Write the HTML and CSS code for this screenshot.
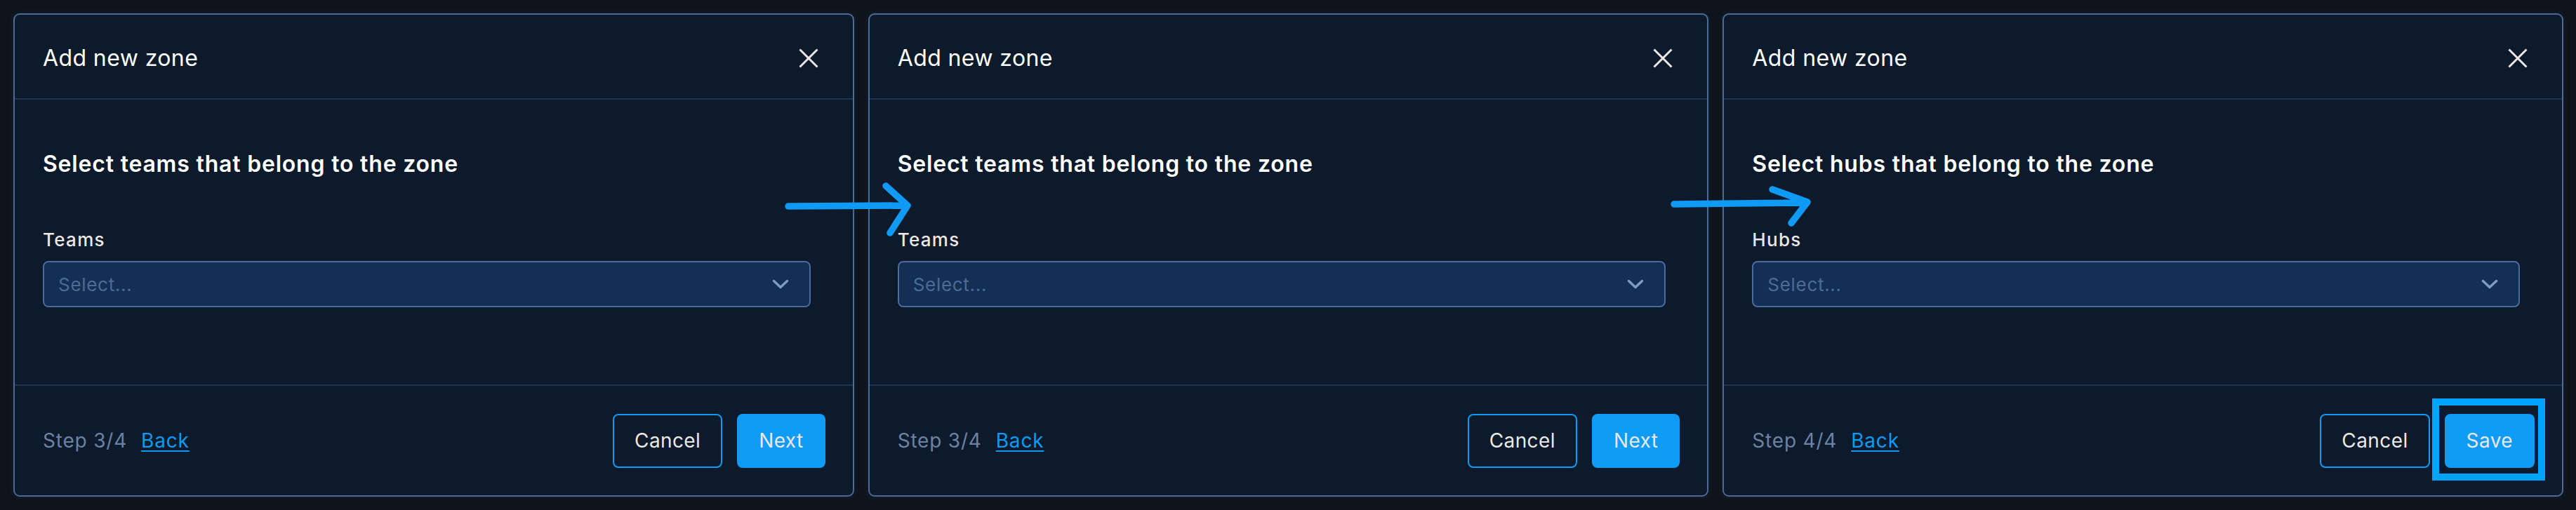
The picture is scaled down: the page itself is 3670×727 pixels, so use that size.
FILE: index.html
```html
<!DOCTYPE html>
<html lang="en">
<head>
<meta charset="utf-8">
<title>Add new zone</title>
<link rel="stylesheet" href="styles.css">
</head>
<body>
<div class="page">
  <section class="modal">
    <header class="modal-header">
      <h2 class="modal-title">Add new zone</h2>
      <button class="close-btn" aria-label="Close"><svg viewBox="0 0 28 28" width="28" height="28"><path d="M1.5 1.5 L26.5 26.5 M26.5 1.5 L1.5 26.5"/></svg></button>
    </header>
    <div class="modal-body">
      <h3 class="step-heading">Select teams that belong to the zone</h3>
      <label class="field-label">Teams</label>
      <div class="select"><span class="placeholder">Select...</span><svg class="chevron" viewBox="0 0 24 14" width="24" height="14"><path d="M2.5 2.5 L12 11.5 L21.5 2.5"/></svg></div>
    </div>
    <footer class="modal-footer">
      <div class="step-info"><span class="step-count">Step 3/4</span><a class="back-link" href="#">Back</a></div>
      <div class="actions"><button class="btn btn-outline">Cancel</button><button class="btn btn-primary">Next</button></div>
    </footer>
  </section>

  <section class="modal">
    <header class="modal-header">
      <h2 class="modal-title">Add new zone</h2>
      <button class="close-btn" aria-label="Close"><svg viewBox="0 0 28 28" width="28" height="28"><path d="M1.5 1.5 L26.5 26.5 M26.5 1.5 L1.5 26.5"/></svg></button>
    </header>
    <div class="modal-body">
      <h3 class="step-heading">Select teams that belong to the zone</h3>
      <label class="field-label">Teams</label>
      <div class="select"><span class="placeholder">Select...</span><svg class="chevron" viewBox="0 0 24 14" width="24" height="14"><path d="M2.5 2.5 L12 11.5 L21.5 2.5"/></svg></div>
    </div>
    <footer class="modal-footer">
      <div class="step-info"><span class="step-count">Step 3/4</span><a class="back-link" href="#">Back</a></div>
      <div class="actions"><button class="btn btn-outline">Cancel</button><button class="btn btn-primary">Next</button></div>
    </footer>
  </section>

  <section class="modal">
    <header class="modal-header">
      <h2 class="modal-title">Add new zone</h2>
      <button class="close-btn" aria-label="Close"><svg viewBox="0 0 28 28" width="28" height="28"><path d="M1.5 1.5 L26.5 26.5 M26.5 1.5 L1.5 26.5"/></svg></button>
    </header>
    <div class="modal-body">
      <h3 class="step-heading">Select hubs that belong to the zone</h3>
      <label class="field-label">Hubs</label>
      <div class="select"><span class="placeholder">Select...</span><svg class="chevron" viewBox="0 0 24 14" width="24" height="14"><path d="M2.5 2.5 L12 11.5 L21.5 2.5"/></svg></div>
    </div>
    <footer class="modal-footer">
      <div class="step-info"><span class="step-count">Step 4/4</span><a class="back-link" href="#">Back</a></div>
      <div class="actions"><button class="btn btn-outline">Cancel</button><span class="save-wrap"><button class="btn btn-primary">Save</button><span class="highlight"></span></span></div>
    </footer>
  </section>

  <svg class="arrows" viewBox="0 0 3670 727" width="3670" height="727">
    <path d="M1123 294 L1292 293 M1262 265 L1293 293 L1268 332"/>
    <path d="M2385 291 L2574 289 M2525 270 L2575 288 L2552 318"/>
  </svg>
</div>
</body>
</html>
```

FILE: styles.css
```css
html, body {
  margin: 0;
  padding: 0;
  background: #0e141c;
}

body {
  font-family: "Inter", "Noto Sans", sans-serif;
  color: #ffffff;
}

.page {
  position: relative;
  box-sizing: border-box;
  width: 3670px;
  height: 727px;
  padding: 19px 18px 19px 19px;
  display: grid;
  grid-template-columns: repeat(3, 1fr);
  gap: 20px;
}

.modal {
  box-sizing: border-box;
  display: flex;
  flex-direction: column;
  background: #0c1a2c;
  border: 2px solid #4b6a96;
  border-radius: 9px;
  box-shadow: 0 0 10px rgba(60, 90, 130, 0.18);
  min-width: 0;
}

.modal-header {
  box-sizing: border-box;
  height: 121px;
  flex: 0 0 auto;
  display: flex;
  align-items: center;
  justify-content: space-between;
  padding: 4px 40px 0 40px;
  border-bottom: 2px solid #1b3456;
}

.modal-title {
  margin: 0;
  font-size: 32px;
  font-weight: 400;
  letter-spacing: 0.4px;
  line-height: 40px;
  color: #ffffff;
}

.close-btn {
  width: 46px;
  height: 46px;
  padding: 0;
  border: 0;
  background: transparent;
  display: flex;
  align-items: center;
  justify-content: center;
}

.close-btn svg path {
  stroke: #ece7e4;
  stroke-width: 3;
  fill: none;
}

.modal-body {
  flex: 1 1 auto;
  display: flex;
  flex-direction: column;
  align-items: flex-start;
  padding: 72px 40px 0 40px;
}

.step-heading {
  margin: 0;
  font-size: 32px;
  font-weight: 600;
  letter-spacing: 0.8px;
  line-height: 40px;
  color: #ffffff;
}

.field-label {
  margin-top: 72px;
  font-size: 26px;
  font-weight: 500;
  letter-spacing: 1.3px;
  line-height: 32px;
  color: #ece6e3;
}

.select {
  box-sizing: border-box;
  margin-top: 14px;
  width: 1094px;
  height: 66px;
  display: flex;
  align-items: center;
  justify-content: space-between;
  padding: 0 29px 0 20px;
  background: #132f56;
  border: 2px solid #4a6b9b;
  border-radius: 8px;
}

.placeholder {
  font-size: 26px;
  letter-spacing: 0.7px;
  color: #4d6b95;
}

.chevron path {
  stroke: #7d9bc5;
  stroke-width: 3.5;
  fill: none;
  stroke-linecap: round;
  stroke-linejoin: round;
}

.modal-footer {
  box-sizing: border-box;
  height: 158px;
  flex: 0 0 auto;
  display: flex;
  align-items: center;
  justify-content: space-between;
  padding: 0 39px 0 40px;
  border-top: 2px solid #1b3456;
}

.step-info {
  display: flex;
  align-items: baseline;
  gap: 20px;
  font-size: 28px;
  letter-spacing: 0.8px;
}

.step-count {
  color: #6c82a4;
}

.back-link {
  color: #0d9af2;
  text-decoration: underline;
  text-decoration-thickness: 2px;
  text-underline-offset: 4px;
}

.actions {
  display: flex;
  align-items: center;
  gap: 21px;
}

.btn {
  box-sizing: border-box;
  height: 77px;
  padding: 0 29px;
  border: 2px solid #0d9cf5;
  border-radius: 8px;
  font-family: inherit;
  font-size: 28px;
  letter-spacing: 0.4px;
  color: #ebe7e4;
}

.btn-outline {
  background: transparent;
}

.btn-primary {
  background: #0e9cf7;
  border-color: #0e9cf7;
}

.save-wrap {
  position: relative;
  display: flex;
}

.highlight {
  position: absolute;
  top: -22px;
  bottom: -18px;
  left: -18px;
  right: -15px;
  border: 10px solid #00a3ff;
  pointer-events: none;
}

.arrows {
  position: absolute;
  left: 0;
  top: 0;
  pointer-events: none;
}

.arrows path {
  stroke: #0e9af5;
  stroke-width: 9.5;
  fill: none;
  stroke-linecap: round;
  stroke-linejoin: round;
}
```
